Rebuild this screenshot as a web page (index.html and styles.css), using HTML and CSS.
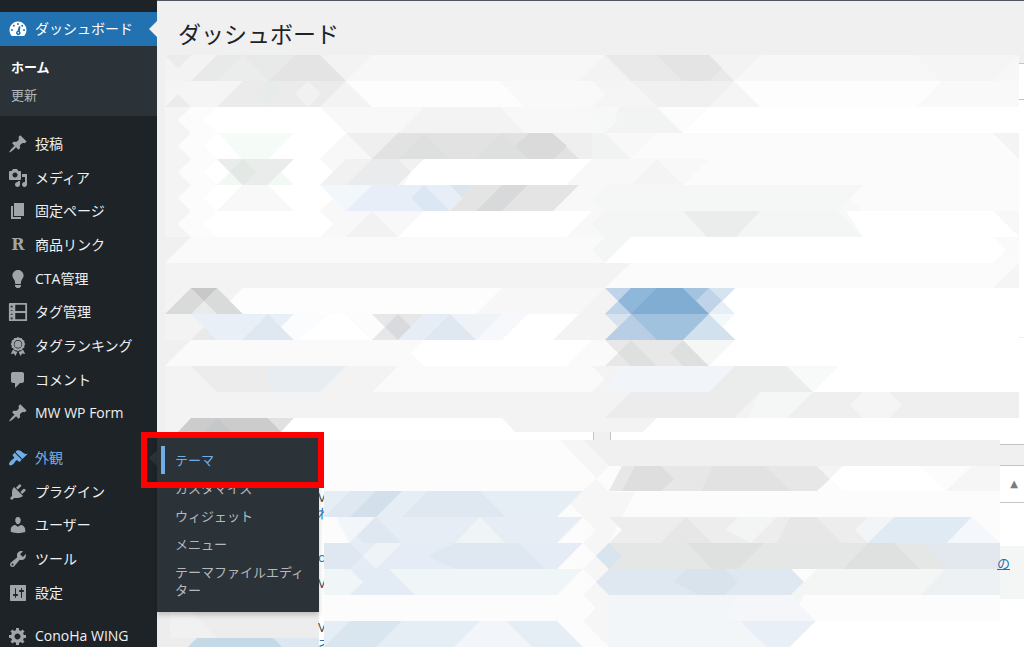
FILE: index.html
```
<!DOCTYPE html>
<html lang="ja">
<head>
    <meta charset="UTF-8">
    <title>ダッシュボード</title>
    <link rel="stylesheet" href="styles.css">
</head>

<body>
    <!-- Admin menu -->
    <nav class="sidebar">
        <a href="#" class="item current">
            <svg class="icon" viewBox="0 0 20 20"><path d="M3.760 17h12.480A8.600 8.600 0 0 0 18.500 11 8.500 8.500 0 0 0 1.500 11c0 2.300.86 4.400 2.260 6z"/><g fill="#2271b1"><circle cx="10" cy="5" r="1"/><circle cx="5.800" cy="6.800" r="1"/><circle cx="14.200" cy="6.800" r="1"/><circle cx="4" cy="11" r="1"/><circle cx="16" cy="11" r="1"/><path d="M11 7l1.400.4-.4 5.200a2.200 2.200 0 1 1-2.600-.6z"/></g><circle cx="10.300" cy="13.800" r=".8"/></svg>
            ダッシュボード
        </a>
        <ul class="submenu">
            <li><a href="#" class="active">ホーム</a></li>
            <li><a href="#">更新</a></li>
        </ul>

        <div class="group contents">
            <a href="#" class="item"><svg class="icon" viewBox="0 0 20 20"><path id="pin" d="M10.440 3.020l1.820-1.820 6.360 6.350-1.830 1.820c-1.050-.68-2.480-.57-3.410.36l-.75.75c-.92.93-1.040 2.350-.35 3.410l-1.830 1.820-2.410-2.410-2.800 2.790c-.42.42-3.380 2.710-3.800 2.290s1.860-3.390 2.280-3.810l2.790-2.790L4.100 9.360l1.830-1.820c1.050.69 2.480.57 3.400-.36l.75-.75c.93-.92 1.050-2.350.36-3.410z"/></svg>投稿</a>
            <a href="#" class="item"><svg class="icon" viewBox="0 0 20 20"><path d="M13 11V4c0-.55-.45-1-1-1h-1.670L9 1H5L3.670 3H2c-.55 0-1 .45-1 1v7c0 .55.45 1 1 1h10c.55 0 1-.45 1-1zM7 4.500c1.380 0 2.500 1.120 2.500 2.500S8.380 9.500 7 9.500 4.500 8.380 4.500 7 5.620 4.500 7 4.500zM14 6h5v10.500c0 1.380-1.120 2.500-2.500 2.500S14 17.880 14 16.500s1.120-2.500 2.500-2.500c.17 0 .34.02.5.05V9h-3V6zm-4 8.050V13h2v3.500c0 1.380-1.120 2.500-2.500 2.500S7 17.880 7 16.500 8.120 14 9.500 14c.17 0 .34.02.5.05z"/></svg>メディア</a>
            <a href="#" class="item"><svg class="icon" viewBox="0 0 20 20"><path d="M6 15V2h10v13H6zm-1 1h8v2H3V5h2v11z"/></svg>固定ページ</a>
            <a href="#" class="item"><span class="icon letter">R</span>商品リンク</a>
            <a href="#" class="item"><svg class="icon" viewBox="0 0 20 20"><path d="M10 1c3.110 0 5.630 2.520 5.630 5.620 0 1.840-2.030 4.580-2.030 4.580-.33.44-.6 1.250-.6 1.800v1c0 .55-.45 1-1 1H8c-.55 0-1-.45-1-1v-1c0-.55-.27-1.360-.6-1.800 0 0-2.020-2.740-2.020-4.580C4.380 3.520 6.890 1 10 1zM7 16.870V16h6v.87c0 .62-.13 1.130-.75 1.130H12c0 .62-.4 1-1.020 1h-2c-.61 0-.98-.38-.98-1h-.25c-.62 0-.75-.51-.75-1.130z"/></svg>CTA管理</a>
            <a href="#" class="item"><svg class="icon" viewBox="-1 -1 22 22"><path fill-rule="evenodd" d="M1 0h18a1 1 0 0 1 1 1v18a1 1 0 0 1-1 1H1a1 1 0 0 1-1-1V1a1 1 0 0 1 1-1zM7 2v7h11V2zM7 11v7h11v-7zM2 3v2h2V3zM2 8v1h2V8zM2 12v1h2v-1zM2 16v2h2v-2z"/></svg>タグ管理</a>
            <a href="#" class="item"><svg class="icon" viewBox="0 0 20 20"><path fill-rule="evenodd" d="M10 1l1.700 1.100 2-.1.900 1.800 1.800.9-.1 2L17.400 8l-1.100 1.600.1 2-1.800.9-.9 1.800-2-.1L10 15.200l-1.700-1-2 .1-.9-1.800-1.800-.9.1-2L2.600 8l1.100-1.300-.1-2 1.800-.9.900-1.800 2 .1zM10 4a4.200 4.200 0 1 0 0 8.400A4.200 4.200 0 0 0 10 4z"/><circle cx="10" cy="8.200" r="3.500"/><path d="M5 13.500l2.200 1.800 2.200.5L7.500 20l-1.700-2.400-3 .4zM15 13.500l-2.200 1.800-2.200.5 1.900 4.200 1.700-2.400 3 .4z"/></svg>タグランキング</a>
            <a href="#" class="item"><svg class="icon" viewBox="0 0 20 20"><path d="M5 2h9c1.100 0 2 .9 2 2v7c0 1.100-.9 2-2 2h-2l-5 5v-5H5c-1.100 0-2-.9-2-2V4c0-1.100.9-2 2-2z"/></svg>コメント</a>
            <a href="#" class="item"><svg class="icon" viewBox="0 0 20 20"><use href="#pin"/></svg>MW WP Form</a>
        </div>

        <div class="group manage">
            <a href="#" class="item open"><svg class="icon" viewBox="0 0 20 20"><path d="M14.480 11.060L7.410 3.990l1.500-1.500c.5-.56 2.300-.47 3.510.32 1.210.8 1.430 1.280 2.910 2.100 1.180.64 2.450 1.260 4.450.85zm-.71.71L6.700 4.700 4.930 6.470c-.39.39-.39 1.020 0 1.410l1.060 1.060c.39.39.39 1.030 0 1.420-.6.6-1.430 1.110-2.210 1.690-.35.26-.7.53-1.010.84C1.430 14.230.4 16.080 1.400 17.070c.99 1 2.840-.03 4.180-1.360.31-.31.58-.66.85-1.020.57-.78 1.080-1.610 1.690-2.210.39-.39 1.020-.39 1.410 0l1.060 1.060c.39.39 1.020.39 1.410 0z"/></svg>外観</a>
            <a href="#" class="item"><svg class="icon" viewBox="0 0 20 20"><path d="M13.110 4.360L9.870 7.600 8 5.730l3.240-3.240c.35-.34 1.050-.2 1.560.32.52.51.66 1.210.31 1.550zm-8 1.770l.91-1.120 9.010 9.010-1.190.84c-.71.71-2.630 1.160-3.820 1.160H6.140L4.900 17.260c-.59.59-1.540.59-2.120 0-.59-.58-.59-1.530 0-2.120l1.240-1.240v-3.880c0-1.130.4-3.190 1.090-3.890zm7.260 3.970l3.240-3.240c.34-.35 1.040-.21 1.550.31.52.51.66 1.210.31 1.550l-3.240 3.250z"/></svg>プラグイン</a>
            <a href="#" class="item"><svg class="icon" viewBox="0 0 20 20"><path d="M10 9.250c-2.270 0-2.730-3.440-2.730-3.440C7 4.020 7.820 2 9.970 2c2.160 0 2.980 2.020 2.710 3.810 0 0-.41 3.440-2.680 3.440zm0 2.570L12.720 10c2.390 0 4.520 2.330 4.520 4.530v2.490s-3.650 1.130-7.240 1.130c-3.650 0-7.240-1.130-7.240-1.130v-2.490c0-2.250 1.940-4.480 4.470-4.480z"/></svg>ユーザー</a>
            <a href="#" class="item"><svg class="icon" viewBox="0 0 20 20"><path d="M16.680 9.770c-1.340 1.340-3.300 1.670-4.950.99l-5.410 6.520c-.99.99-2.590.99-3.580 0s-.99-2.590 0-3.570l6.520-5.420c-.68-1.650-.35-3.610.99-4.950 1.280-1.280 3.120-1.620 4.720-1.060l-2.890 2.890 2.820 2.820 2.860-2.870c.53 1.580.18 3.390-1.080 4.650zM3.810 16.210c.4.390 1.040.39 1.430 0 .4-.4.4-1.040 0-1.430-.39-.4-1.030-.4-1.430 0-.39.39-.39 1.030 0 1.430z"/></svg>ツール</a>
            <a href="#" class="item"><svg class="icon" viewBox="0 0 20 20"><path d="M18 17V3c0-.55-.45-1-1-1H3c-.55 0-1 .45-1 1v14c0 .55.45 1 1 1h14c.55 0 1-.45 1-1zM8 11h1c.55 0 1 .45 1 1s-.45 1-1 1H8v1.500c0 .28-.22.5-.5.5s-.5-.22-.5-.5V13H6c-.55 0-1-.45-1-1s.45-1 1-1h1V5.500c0-.28.22-.5.5-.5s.5.22.5.5V11zm5-2h-1c-.55 0-1-.45-1-1s.45-1 1-1h1V5.500c0-.28.22-.5.5-.5s.5.22.5.5V7h1c.55 0 1 .45 1 1s-.45 1-1 1h-1v5.500c0 .28-.22.5-.5.5s-.5-.22-.5-.5V9z"/></svg>設定</a>
            <ul class="flyout">
                <li><a href="#" class="selected">テーマ</a></li>
                <li><a href="#">カスタマイズ</a></li>
                <li><a href="#">ウィジェット</a></li>
                <li><a href="#">メニュー</a></li>
                <li><a href="#">テーマファイルエディター</a></li>
            </ul>
            <div class="marker"></div>
        </div>

        <a href="#" class="item"><svg class="icon" viewBox="0 0 20 20"><path d="M18 12h-2.180c-.17.7-.44 1.350-.81 1.930l1.540 1.540-2.100 2.100-1.540-1.540c-.58.36-1.230.63-1.910.79V19H8v-2.180c-.68-.16-1.330-.43-1.910-.79l-1.540 1.540-2.120-2.120 1.540-1.540c-.36-.58-.63-1.230-.79-1.910H1V9.030h2.170c.16-.7.44-1.350.8-1.940L2.430 5.550l2.100-2.100 1.540 1.540c.58-.37 1.240-.64 1.930-.81V2h3v2.180c.68.16 1.330.43 1.910.79l1.540-1.540 2.120 2.120-1.540 1.540c.36.59.64 1.240.8 1.940H18V12zm-8.500 1.500c1.660 0 3-1.340 3-3s-1.340-3-3-3-3 1.340-3 3 1.340 3 3 3z"/></svg>ConoHa WING</a>
    </nav>

    <main class="content">
        <!-- Mosaic over the dashboard widgets -->
        <svg class="mosaic" viewBox="157 0 867 647" preserveAspectRatio="xMinYMin slice" aria-hidden="true">
            <!-- panels -->
            <path fill="#fff" d="M1019 64h5v381H611V432h408zM157 432h436v215H157zM1000 466h24v181H611V466z"/>
            <path fill="#c3c4c7" d="M1019 63h5v1h-5zM1019 99h5v1h-5zM593 432h1v8h-1zM610 432h1v8h-1zM1000 444h24v1h-24zM1000 465h24v1h-24zM1000 502h24v1h-24z"/>
            <path fill="#eee" d="M1019 337h5v1h-5z"/>
            <path fill="#f4f6f5" d="M1000 546h24v53h-24z"/>

            <!-- row bases, upper block -->
            <path fill="#f3f3f3" d="M165 55h854v26H165z"/>
            <path fill="#f5f5f5" d="M165 81h854v26H165z"/>
            <path fill="#f8f8f8" d="M178 107h841v130H178z"/>
            <path fill="#f4f4f4" d="M165 107h26l-13 13 13 13-13 13 13 13-13 13 13 13-13 13 13 13-13 13 13 13h-26z"/>
            <path fill="#fafafa" d="M191 237h828v26H165zM191 340h828v26H165z"/>
            <path fill="#f3f3f3" d="M165 263h854v25H165zM165 288h854v52H165zM165 366h854v66H165z"/>

            <path fill="#e8e9e9" d="M217 55h103l26 26H191z"/>
            <path fill="#e4e4e4" d="M295 55h25l26 26h-77z"/>
            <path fill="#ebebeb" d="M165 55h26l-13 13zM165 107l13-13 13 13z"/>
            <path fill="#ebecec" d="M230 68l13-13 26 26h-52z"/>
            <path fill="#f7f7f7" d="M372 55h233l-26 26H346z"/>
            <path fill="#e9e9e9" d="M605 55h104l25 26H631z"/>
            <path fill="#e4e4e4" d="M657 55h52l13 13-13 13h-26z"/>
            <path fill="#f7f7f7" d="M761 55h258v26H734z"/>
            <path fill="#f5f5f5" d="M915 55h104l-26 26h-52z"/>

            <path fill="#ebebeb" d="M243 81h103l-26 26H217z"/>
            <path fill="#e7ebea" d="M256 94l13-13 13 13-13 13z"/>
            <path fill="#f1f1f1" d="M295 94l13-13 13 13-13 13z"/>
            <path fill="#f3f3f3" d="M346 81l26 26h-52z"/>
            <path fill="#fdfdfd" d="M346 81h154l25 26H372z"/>
            <path fill="#f9f9f9" d="M500 81h92l13 13-13 13h-67z"/>
            <path fill="#f0f0f0" d="M631 81h103l-25 26h-52z"/>
            <path fill="#fdfdfd" d="M734 81h285v26H760z"/>
            <path fill="#f9f9f9" d="M942 81h77v26H917z"/>

            <path fill="#fcfcfc" d="M191 107h26v130h-26l-13-13 13-13-13-13 13-13-13-13 13-13-13-13 13-13-13-13z"/>
            <path fill="#fff" d="M217 107h103l26 26-26 26 26 26-26 26 13 13-13 13H217l-13-13 13-13-13-13 13-13-13-13 13-13-13-13 13-13-13-13z"/>
            <path fill="#f3f3f3" d="M424 107h76l25 26H398z"/>
            <path fill="#f2f3f3" d="M620 107h37l26 26h-78z"/>
            <path fill="#f5f8f7" d="M579 107h26l13 13-13 13-26-26z"/>
            <path fill="#fcfcfc" d="M657 107h52l-26 26z"/>
            <path fill="#fff" d="M709 107h310v26H683z"/>

            <path fill="#f5fbf7" d="M219 133h75l-26 26h-26z"/>
            <path fill="#efefef" d="M346 133h246l13 26H372z"/>
            <path fill="#e2e2e3" d="M398 133h154l27 26H372z"/>
            <path fill="#dedfdf" d="M424 133l26 26h-52zM502 133l26 26h-52z"/>
            <path fill="#dadadb" d="M530 133h22l15 13-13 13h-26l-13-13z"/>
            <path fill="#f1f2f2" d="M592 133h13l26 26h-39z"/>
            <path fill="#fbfbfb" d="M657 133h362v78H863l-26-26H683l26-26h-78z"/>
            <path fill="#f4f4f4" d="M993 133h26v26zM657 159l26 26h-52z"/>

            <path fill="#e9ecea" d="M217 159h77l-26 26h-26z"/>
            <path fill="#e2e8e4" d="M230 172l13-13 13 13-13 13z"/>
            <path fill="#f2f8f4" d="M217 185l13-13 12 13zM268 185l13-13 13 13z"/>
            <path fill="#f1f1f2" d="M346 159h78l-26 26h-78z"/>
            <path fill="#eaebec" d="M372 159h26l13 13-13 13h-52z"/>
            <path fill="#fff" d="M424 159h168l-26 26H404l7-13z"/>

            <path fill="#f8f8f8" d="M242 185h26l26 26h-77z"/>
            <path fill="#f1f7fb" d="M320 185h52l-26 26z"/>
            <path fill="#e8eef7" d="M372 185h103l-25 26H346z"/>
            <path fill="#dbe7f2" d="M424 185l26 26h-26l-13-13z"/>
            <path fill="#dde4ea" d="M450 185h25l-13 13z"/>
            <path fill="#e4e4e5" d="M475 185h104l-26 26H450z"/>
            <path fill="#d8d9da" d="M502 185h26l-26 26h-26z"/>
            <path fill="#f5f6f6" d="M605 185h258l-26 26H605l-13-13z"/>

            <path fill="#f2f2f2" d="M372 211l26 26h-52z"/>
            <path fill="#fff" d="M424 211h168l-26 26H398z"/>
            <path fill="#f4f6f6" d="M605 211h233l25 26H605l-13-13z"/>
            <path fill="#ebeded" d="M683 211h77l-24 26h-29z"/>
            <path fill="#fff" d="M846 211h147l26 26H863z"/>
            <path fill="#f4f5f5" d="M605 237h26l-26 26-13-13z"/>
            <path fill="#fff" d="M631 237h362l13 13-13 13H605z"/>
            <path fill="#fbfbfb" d="M631 263h388v25H605z"/>
            <path fill="#f5f5f5" d="M1019 263v25h-26z"/>

            <path fill="#d9dada" d="M191 288h26l26 26h-78z"/>
            <path fill="#c8c8c8" d="M191 288h26l-13 13z"/>
            <path fill="#ebebeb" d="M191 314l13-13 13 13z"/>
            <path fill="#fdfdfd" d="M243 288h259l-26 26H243l-13-13z"/>
            <path fill="#f7f7f7" d="M502 288h103l-26 26H476z"/>
            <path fill="#fff" d="M709 288h310v78H709z"/>
            <path fill="#bfd4e8" d="M605 288h130l-26 26h-78zM605 314l13-13 13 13z"/>
            <path fill="#8fb7d9" d="M631 288h52l13 13-13 13h-52l-13-13z"/>
            <path fill="#82add2" d="M657 288h26l26 26h-78z"/>
            <path fill="#a4c3df" d="M683 288h26l-13 13z"/>
            <path fill="#d6e4f0" d="M709 288h26l-13 13z"/>
            <path fill="#e6eef6" d="M709 314l13-13 13 13z"/>

            <path fill="#e9eff6" d="M191 314h103l-26 26h-51z"/>
            <path fill="#dfe8f1" d="M268 314l26 26h-52z"/>
            <path fill="#e8e9ea" d="M191 340l13-13 13 13z"/>
            <path fill="#fafcfe" d="M294 314h52l-26 26h-26l-13-13z"/>
            <path fill="#fff" d="M330 314h16l26 26h-75z"/>
            <path fill="#fcfcfc" d="M346 314h26l13 13-13 13z"/>
            <path fill="#e6e7e8" d="M372 314h52l-26 26h-26l13-13z"/>
            <path fill="#d9dade" d="M398 314l13 13-13 13-13-13z"/>
            <path fill="#e6edf5" d="M424 314h52l-26 26h-52z"/>
            <path fill="#eff3f7" d="M450 314h52l-26 26h-26z"/>
            <path fill="#dfe8f1" d="M450 314l26 26h-52z"/>
            <path fill="#f6f8fc" d="M502 314h26l-13 26h-39z"/>
            <path fill="#fff" d="M528 314h51l-26 26h-51z"/>
            <path fill="#b7cee5" d="M631 314h78l26 26H605z"/>
            <path fill="#d6e3ee" d="M605 314h26l-13 13z"/>
            <path fill="#a0c2de" d="M631 314h78l-26 26h-26z"/>
            <path fill="#d2e1ee" d="M709 314l26 26h-52z"/>
            <path fill="#f3f8fb" d="M709 314h26l-13 13z"/>

            <path fill="#fff" d="M424 340h168l-26 26H424l-13-13z"/>
            <path fill="#e8e8e8" d="M605 340h78l26 26H605l13-13z"/>
            <path fill="#dedfdf" d="M631 340l26 26h-26l-13-13zM670 353l13-13 26 26h-26z"/>
            <path fill="#f5f7f6" d="M683 340h52l-26 26z"/>
            <path fill="#ececec" d="M191 366h77l26 26h-77z"/>
            <path fill="#e8edf1" d="M268 366h78l-26 26h-52z"/>
            <path fill="#fafafa" d="M398 366h194l13 13-13 13H372z"/>
            <path fill="#f1f5fa" d="M620 366h115l-26 26H605z"/>
            <path fill="#ebecec" d="M735 366h52l26 26H709z"/>
            <path fill="#f8f9f9" d="M787 366h52l-26 26z"/>
            <path fill="#fff" d="M839 366h180v26H813z"/>
            <path fill="#ececec" d="M631 392h129l-26 26H605z"/>
            <path fill="#f4f7f6" d="M760 392h53l-26 26h-39z"/>
            <path fill="#efeff0" d="M813 392h206v26H787z"/>
            <path fill="#f5f5f5" d="M863 392h26l13 13-13 13h-26l-13-13z"/>
            <path fill="#ccc" d="M191 418h77l14 14H178z"/>
            <path fill="#c5c8c9" d="M204 432l14-14 13 14z"/>
            <path fill="#e1e1e1" d="M268 418h26l-13 14z"/>
            <path fill="#fff" d="M294 418h208l13 14H281zM657 418h362v14H643z"/>

            <!-- row bases, lower block -->
            <path fill="#f0f0f0" d="M594 432h16v8h-16z"/>
            <path fill="#fcfcfc" d="M324 440h676v207H324z"/>
            <path fill="#f0f0f0" d="M583 440h417v26H609zM1000 445h24v20h-24z"/>
            <path fill="#f6f6f6" d="M560 440h23l26 26-13 13 13 13h26l-13 25-13 26 13 26-13 52 26 26h-26l-26-26 13-13-13-13 13-13-26-26 26-26-26-26 26-26z"/>

            <path fill="#e7e7e7" d="M622 466h195l13 13-13 12H609z"/>
            <path fill="#dedede" d="M635 466h26l13 13-13 12h-39z"/>
            <path fill="#e2e2e2" d="M713 466h52l26 25h-90z"/>
            <path fill="#f4f4f4" d="M817 466h26l-13 13z"/>
            <path fill="#fff" d="M843 466h77l26 25H843l-13-12z"/>
            <path fill="#f6f6f6" d="M972 466h28v25h-54z"/>

            <path fill="#e6eef5" d="M324 491h259l-26 26H324z"/>
            <path fill="#dfe8f0" d="M350 491h52l-26 26h-52zM428 491h52l26 26H402z"/>
            <path fill="#d3dfea" d="M376 491h26l-26 26h-26z"/>

            <path fill="#f2f5fa" d="M336 517h39l-26 26z"/>
            <path fill="#e6edf5" d="M375 517h208l-26 26H349z"/>
            <path fill="#dfe7f1" d="M376 517l26 26h-39l-6-7z"/>
            <path fill="#eff4f7" d="M480 517l25 26h-50z"/>
            <path fill="#ededed" d="M609 517h259l26 26H609l13-13z"/>
            <path fill="#e7e7e7" d="M686 517l26 26h-52zM790 517h26l26 26h-65z"/>
            <path fill="#f3f4f4" d="M738 517h39l-26 26-26-13z"/>
            <path fill="#f2f5f8" d="M868 517h26l-26 26-13-13z"/>
            <path fill="#e0eaf3" d="M894 517h78l-25 26h-79z"/>
            <path fill="#f4f7fb" d="M972 517l28 26h-53z"/>

            <path fill="#e5ecf5" d="M324 543h259l-26 26H324z"/>
            <path fill="#dfe8f1" d="M350 543l13 13-13 13h-26v-26zM454 543h65l26 26h-91l-26-13z"/>
            <path fill="#eef3f7" d="M376 543h26l-26 26-13-13z"/>
            <path fill="#fcfcfc" d="M583 543l13 13-13 13-13-13z"/>
            <path fill="#e5e7e7" d="M609 543h391v26H609l-13-13z"/>
            <path fill="#d9e5ee" d="M609 543l13 13-13 13-13-13z"/>
            <path fill="#dfe1e0" d="M687 543h77l-26 26h-26zM868 543h26l26 26h-77z"/>
            <path fill="#e2e8ee" d="M920 543h80v26h-54z"/>

            <path fill="#f0f5f8" d="M324 569h259l-26 26H324z"/>
            <path fill="#e3ebf4" d="M350 569h39l26 26h-65l13-13z"/>
            <path fill="#dfe8f1" d="M609 569h182l13 13-13 13H609l-13-13z"/>
            <path fill="#d8e3ec" d="M686 569h39l13 13-13 13h-26l-25-13z"/>
            <path fill="#f4f6f5" d="M817 569h183v26H791z"/>
            <path fill="#edf1f4" d="M946 569h54v26h-80z"/>
            <path fill="#f3f6f9" d="M609 595h195l-13 26H609zM609 621h131l26 26H609z"/>
            <path fill="#f5f6fa" d="M738 595h52l26 26h-91z"/>
            <path fill="#e6eef5" d="M324 621h233l26 26H324z"/>
            <path fill="#d9e5ef" d="M350 621h52l-26 26h-52z"/>
            <path fill="#f2f6fa" d="M480 621h26l26 26h-78z"/>
            <path fill="#e8eff6" d="M740 621h76l-26 26h-24z"/>
            <path fill="#fff" d="M816 621h208v26H790z"/>

            <path fill="#ededed" d="M157 610h162v37H157z"/>
            <path fill="#f1f1f1" d="M170 612h21l26 26h-47z"/>
            <path fill="#dce7f1" d="M197 638h122v9H188z"/>
            <path fill="#c4d8e6" d="M197 638h76l9 9h-94z"/>
        </svg>

        <h1>ダッシュボード</h1>

        <aside class="panel">
            <button class="toggle" aria-label="パネルを閉じる">▲</button>
            <a href="#">の</a>
        </aside>

        <!-- Ends of the widget lines that show beside the fly-out -->
        <div class="edge">
            <p>V<br><a href="#">れ</a></p>
            <p><a href="#">o</a></p>
            <p>V</p>
            <p>V<br><a href="#">ネ</a></p>
        </div>
    </main>
</body>
</html>
```
FILE: styles.css
```
* {
    box-sizing: border-box;
}

body {
    display: flex;
    height: 100vh;
    margin: 0;
    overflow: hidden;
    font-family: "Open Sans", "Noto Sans CJK JP", sans-serif;
    font-size: 13px;
    color: #3c434a;
    background: #f0f0f0;
}

a {
    color: #2271b1;
}

ul {
    margin: 0;
    padding: 0;
    list-style: none;
}

/* sidebar */
.sidebar {
    position: relative;
    z-index: 1;
    flex: none;
    width: 157px;
    padding-top: 12px;
    background: #1d2327;
}

.item {
    display: flex;
    align-items: center;
    gap: 7px;
    height: 34px;
    padding-left: 8px;
    font-size: 14px;
    line-height: 20px;
    white-space: nowrap;
    color: #f0f0f1;
    text-decoration: none;
}

.icon {
    flex: none;
    width: 20px;
    height: 20px;
    fill: #a0a5aa;
}

.letter {
    font: bold 16px/20px "DejaVu Serif", serif;
    text-align: center;
    color: #a0a5aa;
}

.current {
    position: relative;
    color: #fff;
    background: #2271b1;
}

.current .icon {
    fill: #fff;
}

.current::after {
    content: "";
    position: absolute;
    right: 0;
    border: 8px solid transparent;
    border-left: 0;
    border-right-color: #f0f0f0;
}

.submenu {
    height: 70px;
    padding: 7px 11px;
    background: #2c3338;
}

.submenu a {
    display: block;
    line-height: 28px;
    color: #b4b9be;
    text-decoration: none;
}

.submenu .active {
    font-weight: bold;
    color: #fff;
}

.group {
    display: flex;
    flex-direction: column;
    margin: 11px 0 9px;
}

.group .item {
    flex: 1;
}

.contents {
    height: 303px;
}

.manage {
    position: relative;
    height: 169px;
}

.open {
    position: relative;
    color: #72aee6;
}

.open .icon {
    fill: #72aee6;
}

.open::after {
    content: "";
    position: absolute;
    right: 0;
    border: 8px solid transparent;
    border-left: 0;
    border-right-color: #2c3338;
}

/* fly-out menu */
.flyout {
    position: absolute;
    top: -3px;
    left: 157px;
    width: 162px;
    padding: 8px 0;
    background: #2c3338;
    box-shadow: 0 3px 5px rgba(0, 0, 0, .2);
}

.flyout a {
    display: block;
    padding: 5px 14px 5px 18px;
    line-height: 18px;
    color: #b4b9be;
    text-decoration: none;
}

.flyout .selected {
    margin-left: 4px;
    padding-left: 14px;
    color: #72aee6;
    box-shadow: inset 4px 0 #72aee6;
}

.marker {
    position: absolute;
    top: -9px;
    left: 141px;
    width: 183px;
    height: 56px;
    border: 6px solid #f00;
}

/* content */
.content {
    position: relative;
    flex: 1;
    border-top: 1px solid #50575e;
}

.mosaic {
    position: absolute;
    top: -1px;
    left: 0;
    z-index: -1;
    width: 100%;
    height: 100vh;
}

h1 {
    margin: 0;
    padding: 16px 21px;
    font-size: 23px;
    font-weight: normal;
    line-height: 34px;
    color: #1d2327;
}

.panel {
    position: absolute;
    top: 464px;
    right: 0;
    display: flex;
    flex-direction: column;
    align-items: flex-start;
    gap: 52px;
    width: 27px;
}

.toggle {
    width: 27px;
    height: 36px;
    padding: 0 0 0 7px;
    border: 0;
    font: 10px "DejaVu Sans", sans-serif;
    color: #787c82;
    background: none;
}

.edge {
    position: absolute;
    top: 488px;
    left: 161px;
    width: 6px;
    overflow: hidden;
    line-height: 16px;
}

.edge a {
    text-decoration: none;
}

.edge p {
    margin: 0 0 28px;
}

.edge p:nth-child(2) {
    margin-bottom: 10px;
}
```
